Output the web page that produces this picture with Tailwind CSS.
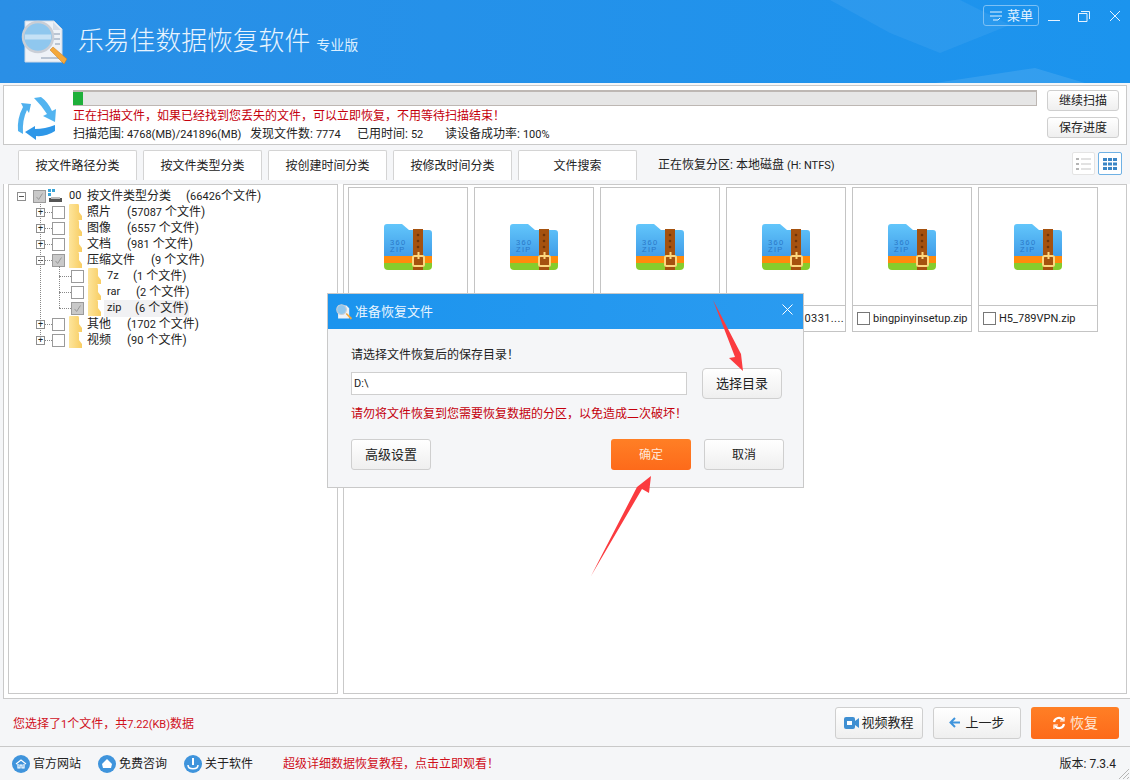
<!DOCTYPE html>
<html lang="zh-CN">
<head>
<meta charset="UTF-8">
<title>乐易佳数据恢复软件</title>
<script src="https://cdn.jsdelivr.net/npm/@tailwindcss/browser@4"></script>
</head>
<body class="w-[1130px] h-[780px] overflow-hidden relative bg-[#f5f6f8] text-[12px] leading-4 text-[#222] font-['Roboto','Noto_Sans_CJK_SC',sans-serif]">

<svg class="absolute w-0 h-0">
  <defs>
    <linearGradient id="zb" x1="0" y1="0" x2="0" y2="1"><stop offset="0" stop-color="#62c6fb"/><stop offset="1" stop-color="#3d98e6"/></linearGradient>
    <linearGradient id="fb" x1="0" y1="0" x2="1" y2="0"><stop offset="0" stop-color="#fde59c"/><stop offset="1" stop-color="#f8cd62"/></linearGradient>
  </defs>
  <symbol id="zip" viewBox="0 0 48 46">
    <path d="M3 0h15l7 6h20a3 3 0 0 1 3 3v27H0V3a3 3 0 0 1 3-3z" fill="url(#zb)"/>
    <path d="M0 32h48v8H0z" fill="#ff8a0c"/>
    <path d="M0 39h48v3a4 4 0 0 1-4 4H4a4 4 0 0 1-4-4z" fill="#86cc2c"/>
    <rect x="29" y="5" width="10" height="41" fill="#a5520f"/>
    <circle cx="34" cy="11" r="1.300" fill="#6e3408"/><circle cx="34" cy="17" r="1.300" fill="#6e3408"/><circle cx="34" cy="23" r="1.300" fill="#6e3408"/>
    <rect x="29" y="32" width="11" height="10" rx="1.500" fill="none" stroke="#fcd77e" stroke-width="2"/>
    <path d="M34.500 28v7" stroke="#fcd77e" stroke-width="2"/>
  </symbol>
  <symbol id="folder" viewBox="0 0 13 16">
    <path d="M0 1Q0 0 1 0H9Q10 0 10 2V8L13 12V16H0z" fill="url(#fb)"/>
  </symbol>
  <symbol id="check" viewBox="0 0 13 13">
    <path d="M3 7l2.500 3L10 3" fill="none" stroke="#8e8e8e" stroke-width="1"/>
  </symbol>
</svg>

<!-- header -->
<header class="h-[83px] shrink-0 relative overflow-hidden bg-gradient-to-r from-[#2a8fe6] to-[#1b94ee] flex items-center pl-[21px]">
  <svg class="absolute right-0 top-0 h-[83px] w-[300px]" viewBox="0 0 300 83">
    <path d="M0 0h130l50 25-70 28-50-20z" fill="#fff" opacity=".06"/>
    <path d="M105 83l100-15 50 15z" fill="#fff" opacity=".1"/>
  </svg>
  <svg class="w-[46px] h-[46px] shrink-0 relative" viewBox="0 0 46 46">
    <path d="M4 2h29l8 8v33H4z" fill="#eef2f7" stroke="#cfd8e4"/>
    <path d="M32 3v8h8" fill="#d5dde8"/>
    <path d="M32 15h7M33 20h6M34 25h5M20 39h18" stroke="#a9b7c8" stroke-width="1.500"/>
    <circle cx="17" cy="18" r="15" fill="#8fc7ee" stroke="#c9ced6" stroke-width="2.500"/>
    <path d="M4 18h26" stroke="#dcecf8" stroke-width="5" opacity=".7"/>
    <path d="M29 31l3-3 14 12-3 5z" fill="#f4a83a" stroke="#c97a1c" stroke-width=".5"/>
  </svg>
  <span class="relative ml-[11px] text-[25.800px] leading-none font-light text-[#e8f4fe]">乐易佳数据恢复软件</span>
  <span class="relative ml-[6px] mt-[7px] text-[14px] text-[#dcefff]">专业版</span>
  <div class="absolute right-[9px] top-[5px] flex items-center text-[#e6f3ff]">
    <div class="w-[56px] h-[21px] border border-[#7cc0f5] rounded-[3px] flex items-center justify-center gap-[4px] text-[13px]">
      <svg class="w-[14px] h-[12px]" viewBox="0 0 14 12" fill="none" stroke="currentColor"><path d="M1 2h12M1 6h12M4 10h5l2-2"/></svg>
      <span>菜单</span>
    </div>
    <svg class="w-[12px] h-[12px] ml-[9px]" viewBox="0 0 12 12" stroke="currentColor"><path d="M0 10.500h12"/></svg>
    <svg class="w-[12px] h-[12px] ml-[18px]" viewBox="0 0 12 12" fill="none" stroke="currentColor"><path d="M.500 3.500h8.500v8H.500zM3 1.500h8.500V9"/></svg>
    <svg class="w-[12px] h-[12px] ml-[19px]" viewBox="0 0 12 12" fill="none" stroke="currentColor"><path d="M1 1l10 10M11 1L1 11"/></svg>
  </div>
</header>

<!-- scan panel -->
<section class="mt-[2px] mx-[3px] h-[60px] bg-white border border-[#c9c9c9] flex">
  <svg class="w-[42px] h-[47px] ml-[11px] mt-[9px] shrink-0" viewBox="15 95 42 47">
    <path d="M34 98L41 97Q48 102 52 111L56 109 55 122 43 116 47 114Q42 106 34 98z" fill="#52b4f0"/>
    <path d="M31 104L21 103 23 107Q17 118 18 131L23 134Q22 120 27 110L29 113z" fill="#4fb0ee"/>
    <path d="M25 132L35 126V129Q45 129 55 125V131Q46 137 36 136V140z" fill="#2e97e8"/>
  </svg>
  <div class="ml-[16px] flex-1 pt-[4px]">
    <div class="w-[964px] h-[16px] bg-[#e6e6e6] border-t-2 border-[#bdb7b3] border-b border-r flex">
      <div class="w-[10px] bg-[#1eb03a]"></div>
    </div>
    <p class="mt-[1px] h-[16px] text-[#c4000c] font-['Noto_Sans_CJK_SC']">正在扫描文件，如果已经找到您丢失的文件，可以立即恢复，不用等待扫描结束！</p>
    <p class="mt-[3px] h-[16px] flex whitespace-pre">
      <span class="w-[177px]">扫描范围: <span class="text-[11px]">4768(MB)/241896(MB)</span></span><span class="w-[107px]">发现文件数: <span class="text-[11px]">7774</span></span><span class="w-[88px]">已用时间: <span class="text-[11px]">52</span></span><span>读设备成功率: <span class="text-[11px]">100%</span></span>
    </p>
  </div>
  <div class="w-[72px] mr-[7px] mt-[4px] flex flex-col gap-[6px] shrink-0">
    <button class="h-[21px] border border-[#cfcfcf] rounded-[3px] bg-gradient-to-b from-white to-[#efefef]">继续扫描</button>
    <button class="h-[21px] border border-[#cfcfcf] rounded-[3px] bg-gradient-to-b from-white to-[#efefef]">保存进度</button>
  </div>
</section>

<!-- tabs -->
<nav class="mt-[5px] h-[30px] pl-[18px] flex items-end relative">
  <div class="w-[119px] h-[30px] bg-white border border-b-0 border-[#d4d4d4] rounded-t-[2px] flex items-center justify-center">按文件路径分类</div>
  <div class="w-[119px] h-[30px] ml-[6px] bg-white border border-b-0 border-[#d4d4d4] rounded-t-[2px] flex items-center justify-center">按文件类型分类</div>
  <div class="w-[119px] h-[30px] ml-[6px] bg-white border border-b-0 border-[#d4d4d4] rounded-t-[2px] flex items-center justify-center">按创建时间分类</div>
  <div class="w-[119px] h-[30px] ml-[6px] bg-white border border-b-0 border-[#d4d4d4] rounded-t-[2px] flex items-center justify-center">按修改时间分类</div>
  <div class="w-[119px] h-[30px] ml-[6px] bg-white border border-b-0 border-[#d4d4d4] rounded-t-[2px] flex items-center justify-center">文件搜索</div>
  <span class="ml-[21px] self-center">正在恢复分区: 本地磁盘 <span class="text-[11px]">(H: NTFS)</span></span>
  <div class="absolute right-[8px] top-[2px] flex gap-[3px]">
    <div class="w-[23px] h-[23px] bg-white border border-[#e4e4e4] rounded-[2px] flex items-center justify-center">
      <svg class="w-[15px] h-[12px]" viewBox="0 0 15 12"><path d="M0 0h3v2H0zM0 5h3v2H0zM0 10h3v2H0z" fill="#b5b5b5"/><path d="M5 1h10M5 6h10M5 11h10" stroke="#c5c5c5"/></svg>
    </div>
    <div class="w-[24px] h-[23px] bg-white border border-[#6fb1e4] rounded-[2px] flex items-center justify-center">
      <svg class="w-[14px] h-[12px]" viewBox="0 0 14 12" fill="#3b86c6"><path d="M0 0h4v3H0zM5 0h4v3H5zM10 0h4v3h-4zM0 4.500h4v3H0zM5 4.500h4v3H5zM10 4.500h4v3h-4zM0 9h4v3H0zM5 9h4v3H5zM10 9h4v3h-4z"/></svg>
    </div>
  </div>
</nav>

<!-- main -->
<main class="mt-[4px] h-[515px] ml-[3px] pl-[4px] bg-white border-l border-b border-[#c9c9c9] flex items-start">
  <!-- tree -->
  <div class="w-[330px] h-[510px] bg-white border border-[#c9c9c9] pt-[3px] relative">
    <div class="absolute left-[31px] top-[19px] w-0 h-[135px] border-l border-dotted border-[#888]"></div>
    <div class="absolute left-[50px] top-[81px] w-0 h-[42px] border-l border-dotted border-[#888]"></div>

    <div class="h-[16px] flex items-center pl-[8px] whitespace-pre">
      <span class="w-[9px] h-[9px] border border-[#8e8e8e] bg-white flex items-center justify-center"><i class="w-[5px] h-px bg-[#555]"></i></span>
      <svg class="ml-[7px] w-[13px] h-[13px] bg-[#c9c9c9] border border-[#9a9a9a]"><use href="#check"/></svg>
      <svg class="ml-[2px] w-[15px] h-[14px]" viewBox="0 0 15 14"><path d="M0 0h3v3H0zM4 0h3v3H4zM0 4h3v3H0z" fill="#3aa5d8"/><path d="M1 9h13v4H1z" fill="#555"/><path d="M3 8h9v2H3z" fill="#bbb"/></svg>
      <span class="ml-[6px] w-[18px] text-[11px]">00</span><span class="w-[99px]">按文件类型分类</span><span>(<span class="text-[11px]">66426</span>个文件)</span>
    </div>

    <div class="h-[16px] flex items-center pl-[27px] whitespace-pre">
      <span class="w-[9px] h-[9px] border border-[#8e8e8e] bg-white flex items-center justify-center text-[9px] leading-none">+</span>
      <span class="w-[7px] border-t border-dotted border-[#888]"></span>
      <span class="w-[13px] h-[13px] bg-white border border-[#9a9a9a]"></span>
      <svg class="ml-[4px] w-[13px] h-[16px]"><use href="#folder"/></svg>
      <span class="ml-[5px] w-[40px]">照片</span><span>(<span class="text-[11px]">57087</span> 个文件)</span>
    </div>
    <div class="h-[16px] flex items-center pl-[27px] whitespace-pre">
      <span class="w-[9px] h-[9px] border border-[#8e8e8e] bg-white flex items-center justify-center text-[9px] leading-none">+</span>
      <span class="w-[7px] border-t border-dotted border-[#888]"></span>
      <span class="w-[13px] h-[13px] bg-white border border-[#9a9a9a]"></span>
      <svg class="ml-[4px] w-[13px] h-[16px]"><use href="#folder"/></svg>
      <span class="ml-[5px] w-[40px]">图像</span><span>(<span class="text-[11px]">6557</span> 个文件)</span>
    </div>
    <div class="h-[16px] flex items-center pl-[27px] whitespace-pre">
      <span class="w-[9px] h-[9px] border border-[#8e8e8e] bg-white flex items-center justify-center text-[9px] leading-none">+</span>
      <span class="w-[7px] border-t border-dotted border-[#888]"></span>
      <span class="w-[13px] h-[13px] bg-white border border-[#9a9a9a]"></span>
      <svg class="ml-[4px] w-[13px] h-[16px]"><use href="#folder"/></svg>
      <span class="ml-[5px] w-[40px]">文档</span><span>(<span class="text-[11px]">981</span> 个文件)</span>
    </div>
    <div class="h-[16px] flex items-center pl-[27px] whitespace-pre">
      <span class="w-[9px] h-[9px] border border-[#8e8e8e] bg-white flex items-center justify-center"><i class="w-[5px] h-px bg-[#555]"></i></span>
      <span class="w-[7px] border-t border-dotted border-[#888]"></span>
      <svg class="w-[13px] h-[13px] bg-[#c9c9c9] border border-[#9a9a9a]"><use href="#check"/></svg>
      <svg class="ml-[4px] w-[13px] h-[16px]"><use href="#folder"/></svg>
      <span class="ml-[5px] w-[64px]">压缩文件</span><span>(<span class="text-[11px]">9</span> 个文件)</span>
    </div>

    <div class="h-[16px] flex items-center pl-[50px] whitespace-pre">
      <span class="w-[12px] border-t border-dotted border-[#888]"></span>
      <span class="w-[13px] h-[13px] bg-white border border-[#9a9a9a]"></span>
      <svg class="ml-[4px] w-[13px] h-[16px]"><use href="#folder"/></svg>
      <span class="ml-[6px] w-[26px] text-[11px]">7z</span><span>(<span class="text-[11px]">1</span> 个文件)</span>
    </div>
    <div class="h-[16px] flex items-center pl-[50px] whitespace-pre">
      <span class="w-[12px] border-t border-dotted border-[#888]"></span>
      <span class="w-[13px] h-[13px] bg-white border border-[#9a9a9a]"></span>
      <svg class="ml-[4px] w-[13px] h-[16px]"><use href="#folder"/></svg>
      <span class="ml-[6px] w-[29px] text-[11px]">rar</span><span>(<span class="text-[11px]">2</span> 个文件)</span>
    </div>
    <div class="h-[16px] flex items-center pl-[50px] whitespace-pre">
      <span class="w-[12px] border-t border-dotted border-[#888]"></span>
      <svg class="w-[13px] h-[13px] bg-[#c9c9c9] border border-[#9a9a9a]"><use href="#check"/></svg>
      <svg class="ml-[4px] w-[13px] h-[16px]"><use href="#folder"/></svg>
      <span class="ml-[3px] pl-[3px] w-[85px] bg-[#f1f1f3] flex"><span class="w-[28px] text-[11px]">zip</span><span>(<span class="text-[11px]">6</span> 个文件)</span></span>
    </div>

    <div class="h-[16px] flex items-center pl-[27px] whitespace-pre">
      <span class="w-[9px] h-[9px] border border-[#8e8e8e] bg-white flex items-center justify-center text-[9px] leading-none">+</span>
      <span class="w-[7px] border-t border-dotted border-[#888]"></span>
      <span class="w-[13px] h-[13px] bg-white border border-[#9a9a9a]"></span>
      <svg class="ml-[4px] w-[13px] h-[16px]"><use href="#folder"/></svg>
      <span class="ml-[5px] w-[40px]">其他</span><span>(<span class="text-[11px]">1702</span> 个文件)</span>
    </div>
    <div class="h-[16px] flex items-center pl-[27px] whitespace-pre">
      <span class="w-[9px] h-[9px] border border-[#8e8e8e] bg-white flex items-center justify-center text-[9px] leading-none">+</span>
      <span class="w-[7px] border-t border-dotted border-[#888]"></span>
      <span class="w-[13px] h-[13px] bg-white border border-[#9a9a9a]"></span>
      <svg class="ml-[4px] w-[13px] h-[16px]"><use href="#folder"/></svg>
      <span class="ml-[5px] w-[40px]">视频</span><span>(<span class="text-[11px]">90</span> 个文件)</span>
    </div>
  </div>

  <!-- files -->
  <div class="ml-[5px] w-[784px] h-[510px] bg-white border border-[#c9c9c9] pl-[4px] pt-[2px] flex gap-[6px] items-start">
    <div class="w-[120px] h-[145px] border border-[#c4c4c4]">
      <div class="h-[118px] border-b border-[#c4c4c4] pt-[36px] flex justify-center"><svg class="w-[48px] h-[46px]" viewBox="0 0 48 46"><use href="#zip"/><text x="6" y="21" font-size="7.500" letter-spacing="1.300" fill="#2a78c8" font-family="Liberation Sans">360</text><text x="6" y="28" font-size="7.500" letter-spacing="1.300" fill="#2a78c8" font-family="Liberation Sans">ZIP</text></svg></div>
    </div>
    <div class="w-[120px] h-[145px] border border-[#c4c4c4]">
      <div class="h-[118px] border-b border-[#c4c4c4] pt-[36px] flex justify-center"><svg class="w-[48px] h-[46px]" viewBox="0 0 48 46"><use href="#zip"/><text x="6" y="21" font-size="7.500" letter-spacing="1.300" fill="#2a78c8" font-family="Liberation Sans">360</text><text x="6" y="28" font-size="7.500" letter-spacing="1.300" fill="#2a78c8" font-family="Liberation Sans">ZIP</text></svg></div>
    </div>
    <div class="w-[120px] h-[145px] border border-[#c4c4c4]">
      <div class="h-[118px] border-b border-[#c4c4c4] pt-[36px] flex justify-center"><svg class="w-[48px] h-[46px]" viewBox="0 0 48 46"><use href="#zip"/><text x="6" y="21" font-size="7.500" letter-spacing="1.300" fill="#2a78c8" font-family="Liberation Sans">360</text><text x="6" y="28" font-size="7.500" letter-spacing="1.300" fill="#2a78c8" font-family="Liberation Sans">ZIP</text></svg></div>
    </div>
    <div class="w-[120px] h-[145px] border border-[#c4c4c4] flex flex-col">
      <div class="h-[118px] border-b border-[#c4c4c4] pt-[36px] flex justify-center"><svg class="w-[48px] h-[46px]" viewBox="0 0 48 46"><use href="#zip"/><text x="6" y="21" font-size="7.500" letter-spacing="1.300" fill="#2a78c8" font-family="Liberation Sans">360</text><text x="6" y="28" font-size="7.500" letter-spacing="1.300" fill="#2a78c8" font-family="Liberation Sans">ZIP</text></svg></div>
      <div class="h-[25px] flex items-center justify-end pr-[1px] text-[11px] tracking-[0.4px]">0331....</div>
    </div>
    <div class="w-[120px] h-[145px] border border-[#c4c4c4] flex flex-col">
      <div class="h-[118px] border-b border-[#c4c4c4] pt-[36px] flex justify-center"><svg class="w-[48px] h-[46px]" viewBox="0 0 48 46"><use href="#zip"/><text x="6" y="21" font-size="7.500" letter-spacing="1.300" fill="#2a78c8" font-family="Liberation Sans">360</text><text x="6" y="28" font-size="7.500" letter-spacing="1.300" fill="#2a78c8" font-family="Liberation Sans">ZIP</text></svg></div>
      <div class="flex items-center pl-[4px] h-[25px]"><span class="w-[13px] h-[13px] border border-[#777] shrink-0"></span><span class="ml-[3px] whitespace-nowrap text-[11px]">bingpinyinsetup.zip</span></div>
    </div>
    <div class="w-[120px] h-[145px] border border-[#c4c4c4] flex flex-col">
      <div class="h-[118px] border-b border-[#c4c4c4] pt-[36px] flex justify-center"><svg class="w-[48px] h-[46px]" viewBox="0 0 48 46"><use href="#zip"/><text x="6" y="21" font-size="7.500" letter-spacing="1.300" fill="#2a78c8" font-family="Liberation Sans">360</text><text x="6" y="28" font-size="7.500" letter-spacing="1.300" fill="#2a78c8" font-family="Liberation Sans">ZIP</text></svg></div>
      <div class="flex items-center pl-[4px] h-[25px]"><span class="w-[13px] h-[13px] border border-[#777] shrink-0"></span><span class="ml-[3px] whitespace-nowrap text-[11px]">H5_789VPN.zip</span></div>
    </div>
  </div>
</main>

<!-- action bar -->
<div class="h-[48px] pl-[13px] pr-[11px] border-b border-[#c9c9c9] flex items-center">
  <span class="mt-[3px] text-[#d0101c]">您选择了<span class="text-[11px]">1</span>个文件，共<span class="text-[11px]">7.22(KB)</span>数据</span>
  <div class="ml-auto flex gap-[10px]">
    <button class="w-[88px] h-[32px] border border-[#cfcfcf] rounded-[3px] bg-gradient-to-b from-white to-[#efefef] flex items-center justify-center gap-[2px] text-[13px]">
      <svg class="w-[15px] h-[12px]" viewBox="0 0 15 12"><rect width="11" height="12" rx="2" fill="#3f8fd2"/><path d="M11 4l4-3v10l-4-3z" fill="#3f8fd2"/><rect x="3" y="4" width="5" height="4" fill="#fff"/></svg>视频教程
    </button>
    <button class="w-[88px] h-[32px] border border-[#cfcfcf] rounded-[3px] bg-gradient-to-b from-white to-[#efefef] flex items-center justify-center gap-[5px] text-[13px]">
      <svg class="w-[11px] h-[11px]" viewBox="0 0 11 11" fill="none" stroke="#3f94dc" stroke-width="2"><path d="M6 1L1.500 5.500 6 10M2 5.500h9"/></svg>上一步
    </button>
    <button class="w-[88px] h-[32px] rounded-[3px] bg-gradient-to-b from-[#ff7f25] to-[#fd6a1a] text-[#ffe6d4] flex items-center justify-center gap-[4px] text-[14px]">
      <svg class="w-[14px] h-[14px]" viewBox="0 0 14 14" fill="none" stroke="#fff" stroke-width="2.200"><path d="M2 6a5 5 0 0 1 9-2M12 8a5 5 0 0 1-9 2"/><path d="M12 1v4H8M2 13V9h4" stroke-width="1.200"/></svg>恢复
    </button>
  </div>
</div>

<!-- footer -->
<footer class="h-[33px] pt-[1px] pl-[12px] pr-[14px] flex items-center relative">
  <span class="flex items-center w-[86px]">
    <svg class="w-[18px] h-[18px] mr-[3px]" viewBox="0 0 18 18"><circle cx="9" cy="9" r="9" fill="#3f94dc"/><path d="M4 9l5-4 5 4M6 9v4h2v-3h2v3h2V9" fill="none" stroke="#fff" stroke-width="1.200"/></svg>官方网站
  </span>
  <span class="flex items-center w-[86px]">
    <svg class="w-[18px] h-[18px] mr-[3px]" viewBox="0 0 18 18"><circle cx="9" cy="9" r="9" fill="#3f94dc"/><path d="M9 4l5 5-1 4H5L4 9z" fill="#fff"/></svg>免费咨询
  </span>
  <span class="flex items-center w-[99px]">
    <svg class="w-[18px] h-[18px] mr-[3px]" viewBox="0 0 18 18"><circle cx="9" cy="9" r="9" fill="#3f94dc"/><path d="M9 3v7" stroke="#fff" stroke-width="2"/><path d="M4 10c0 5 10 5 10 0" fill="none" stroke="#fff" stroke-width="1.500"/></svg>关于软件
  </span>
  <span class="text-[#d0101c]">超级详细数据恢复教程，点击立即观看！</span>
  <span class="ml-auto">版本: 7.3.4</span>
  <svg class="absolute right-[1px] bottom-[1px] w-[11px] h-[11px]" viewBox="0 0 11 11" stroke="#b5b5b5"><path d="M1 11L11 1M5 11l6-6M9 11l2-2"/></svg>
</footer>

<!-- dialog -->
<div class="absolute left-[327px] top-[293px] w-[477px] h-[195px] bg-[#f5f6f8] border border-[#c9c9c9] flex flex-col">
  <div class="h-[35px] bg-gradient-to-r from-[#1b94ee] to-[#2a9bf0] flex items-center pl-[8px] text-[#e8f4fe] relative text-[13px]">
    <svg class="w-[16px] h-[16px] mr-[3px]" viewBox="0 0 46 46"><path d="M6 4h24l8 8v30H6z" fill="#eef2f7"/><circle cx="16" cy="16" r="14" fill="#8fc7ee" stroke="#c9ced6" stroke-width="3"/><path d="M28 29l3-3 15 14-3 5z" fill="#f4a83a"/></svg>
    准备恢复文件
    <svg class="absolute right-[10px] top-[10px] w-[11px] h-[11px]" viewBox="0 0 11 11" stroke="#fff" fill="none"><path d="M.500.500l10 10M10.500.500l-10 10"/></svg>
  </div>
  <div class="flex-1 pl-[23px] pr-[19px] relative">
    <p class="mt-[18px] h-[16px]">请选择文件恢复后的保存目录！</p>
    <div class="mt-[5px] flex items-center">
      <div class="w-[336px] h-[23px] bg-white border border-[#cfcfcf] pl-[2px] flex items-center text-[11px]">D:\</div>
      <button class="ml-[15px] w-[80px] h-[31px] border border-[#cfcfcf] rounded-[4px] bg-gradient-to-b from-white to-[#efefef] text-[13px]">选择目录</button>
    </div>
    <p class="mt-[7px] h-[16px] text-[#c4000c]">请勿将文件恢复到您需要恢复数据的分区，以免造成二次破坏！</p>
    <div class="mt-[17px] flex">
      <button class="w-[80px] h-[31px] border border-[#cfcfcf] rounded-[3px] bg-gradient-to-b from-white to-[#efefef] text-[13px]">高级设置</button>
      <button class="ml-[180px] w-[80px] h-[31px] rounded-[3px] bg-gradient-to-b from-[#ff7f25] to-[#fd6a1a] text-[#ffe6d4]">确定</button>
      <button class="ml-[13px] w-[80px] h-[31px] border border-[#cfcfcf] rounded-[3px] bg-gradient-to-b from-white to-[#efefef]">取消</button>
    </div>
  </div>
</div>

<!-- annotation arrows -->
<svg class="absolute left-0 top-0 w-[1130px] h-[780px] pointer-events-none" viewBox="0 0 1130 780" fill="#fb3b3f">
  <path d="M713 300L741 354 743 371 729 358 735 357z"/>
  <path d="M591 576L637 487 651 476 649 493 642 489z"/>
</svg>

</body>
</html>
